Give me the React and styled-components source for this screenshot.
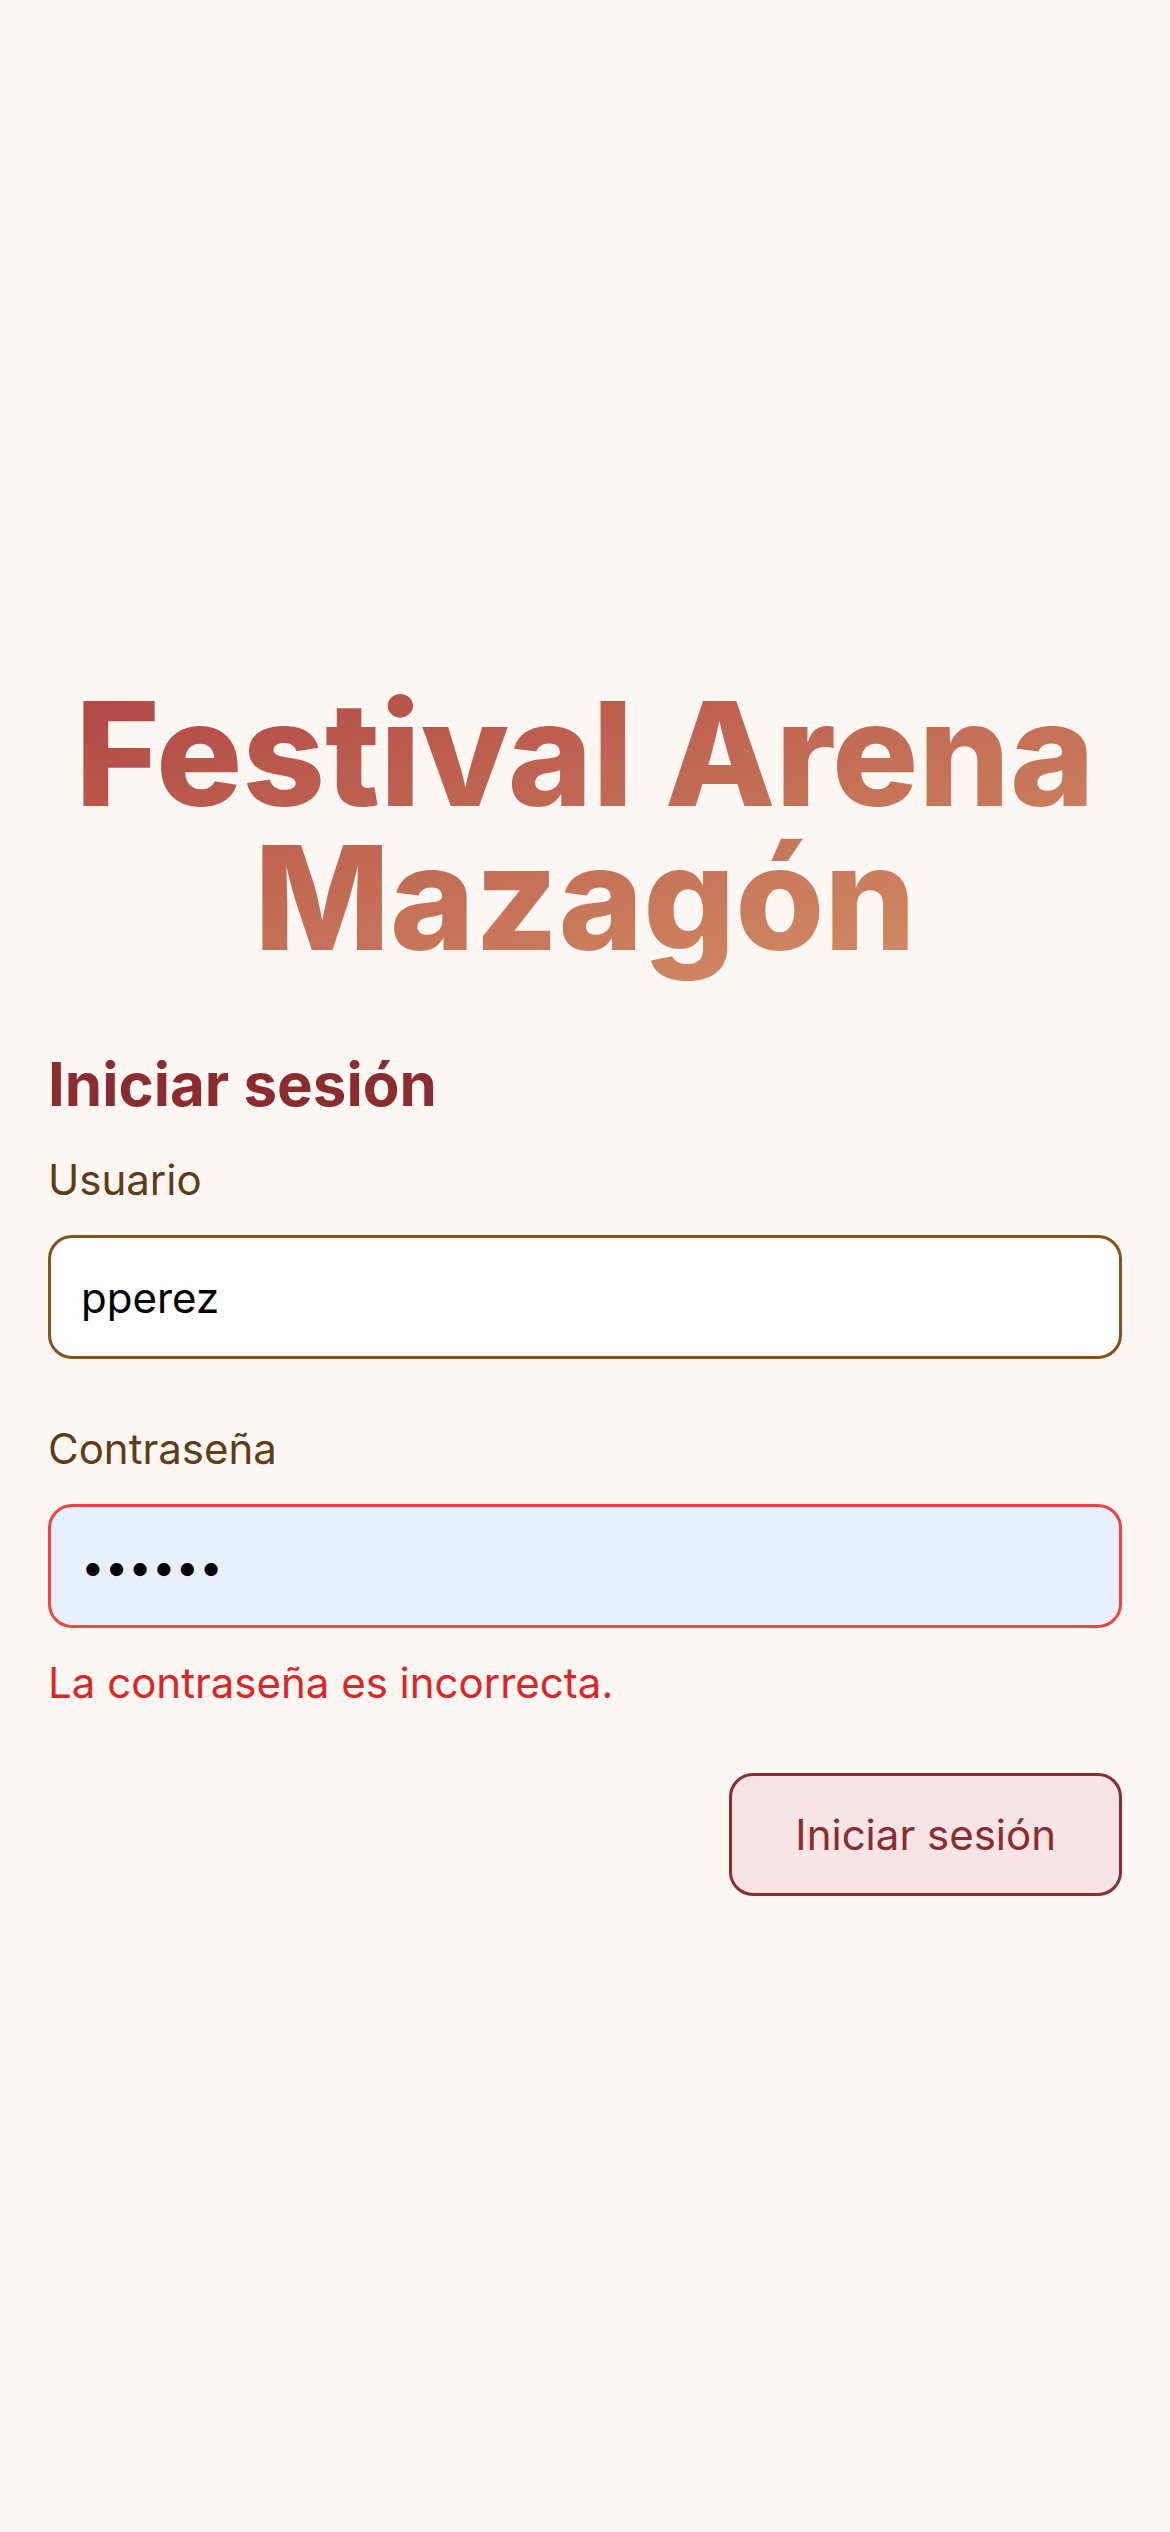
import React from 'react'
import styled, { createGlobalStyle } from 'styled-components'

const GlobalStyle = createGlobalStyle`
  html, body {
    margin: 0;
    padding: 0;
    background: #fcf7f3;
  }
  * {
    box-sizing: border-box;
  }
`

const App = () => {
  return (
    <>
      <GlobalStyle />
      <Page>
        <Title>Festival Arena Mazagón</Title>
        <Heading>Iniciar sesión</Heading>
        <Form onSubmit={(e) => e.preventDefault()}>
          <Field>
            <Label htmlFor='user'>Usuario</Label>
            <Input id='user' type='text' defaultValue='pperez' />
          </Field>
          <Field>
            <Label htmlFor='pass'>Contraseña</Label>
            <Input id='pass' type='password' defaultValue='123456' $error />
            <ErrorText>La contraseña es incorrecta.</ErrorText>
          </Field>
          <Actions>
            <Button type='submit'>Iniciar sesión</Button>
          </Actions>
        </Form>
      </Page>
    </>
  )
}

const Page = styled.main`
  min-height: 100vh;
  display: flex;
  flex-direction: column;
  justify-content: center;
  padding: 46px 48px 0;
  font-family: Inter, 'Noto Sans', sans-serif;
  background: #fcf7f3;
`

// padding-bottom keeps the descender of the "g" inside the clipped gradient
const Title = styled.h1`
  margin: 0 0 48px;
  padding-bottom: 24px;
  font-size: 144px;
  line-height: 1;
  font-weight: 800;
  text-align: center;
  background: linear-gradient(to bottom right, #b04544, #d69667);
  -webkit-background-clip: text;
  background-clip: text;
  color: transparent;
`

const Heading = styled.h2`
  margin: 0 0 24px;
  font-size: 60px;
  line-height: 84px;
  font-weight: 700;
  color: #8b2c30;
`

const Form = styled.form`
  display: flex;
  flex-direction: column;
  gap: 60px;
`

const Field = styled.div`
  display: flex;
  flex-direction: column;
  gap: 25px;
`

const Label = styled.label`
  font-size: 42px;
  line-height: 60px;
  color: #5f3c17;
`

const Input = styled.input`
  height: 124px;
  width: 100%;
  padding: 0 30px;
  border: 3px solid ${(p) => (p.$error ? '#ef4444' : '#85521f')};
  border-radius: 24px;
  background: ${(p) => (p.$error ? '#e8f0fe' : '#ffffff')};
  font-family: Inter, 'Noto Sans', sans-serif;
  font-size: 42px;
  color: #000;
  outline: none;
`

const ErrorText = styled.p`
  margin: 0;
  font-size: 42px;
  line-height: 60px;
  color: #dc2626;
`

const Actions = styled.div`
  display: flex;
  justify-content: flex-end;
`

const Button = styled.button`
  height: 123px;
  padding: 0 63px;
  border: 3px solid #8b2c30;
  border-radius: 24px;
  background: #f7e4e4;
  color: #8b2c30;
  font-family: Inter, 'Noto Sans', sans-serif;
  font-size: 42px;
  cursor: pointer;
`

export default App
